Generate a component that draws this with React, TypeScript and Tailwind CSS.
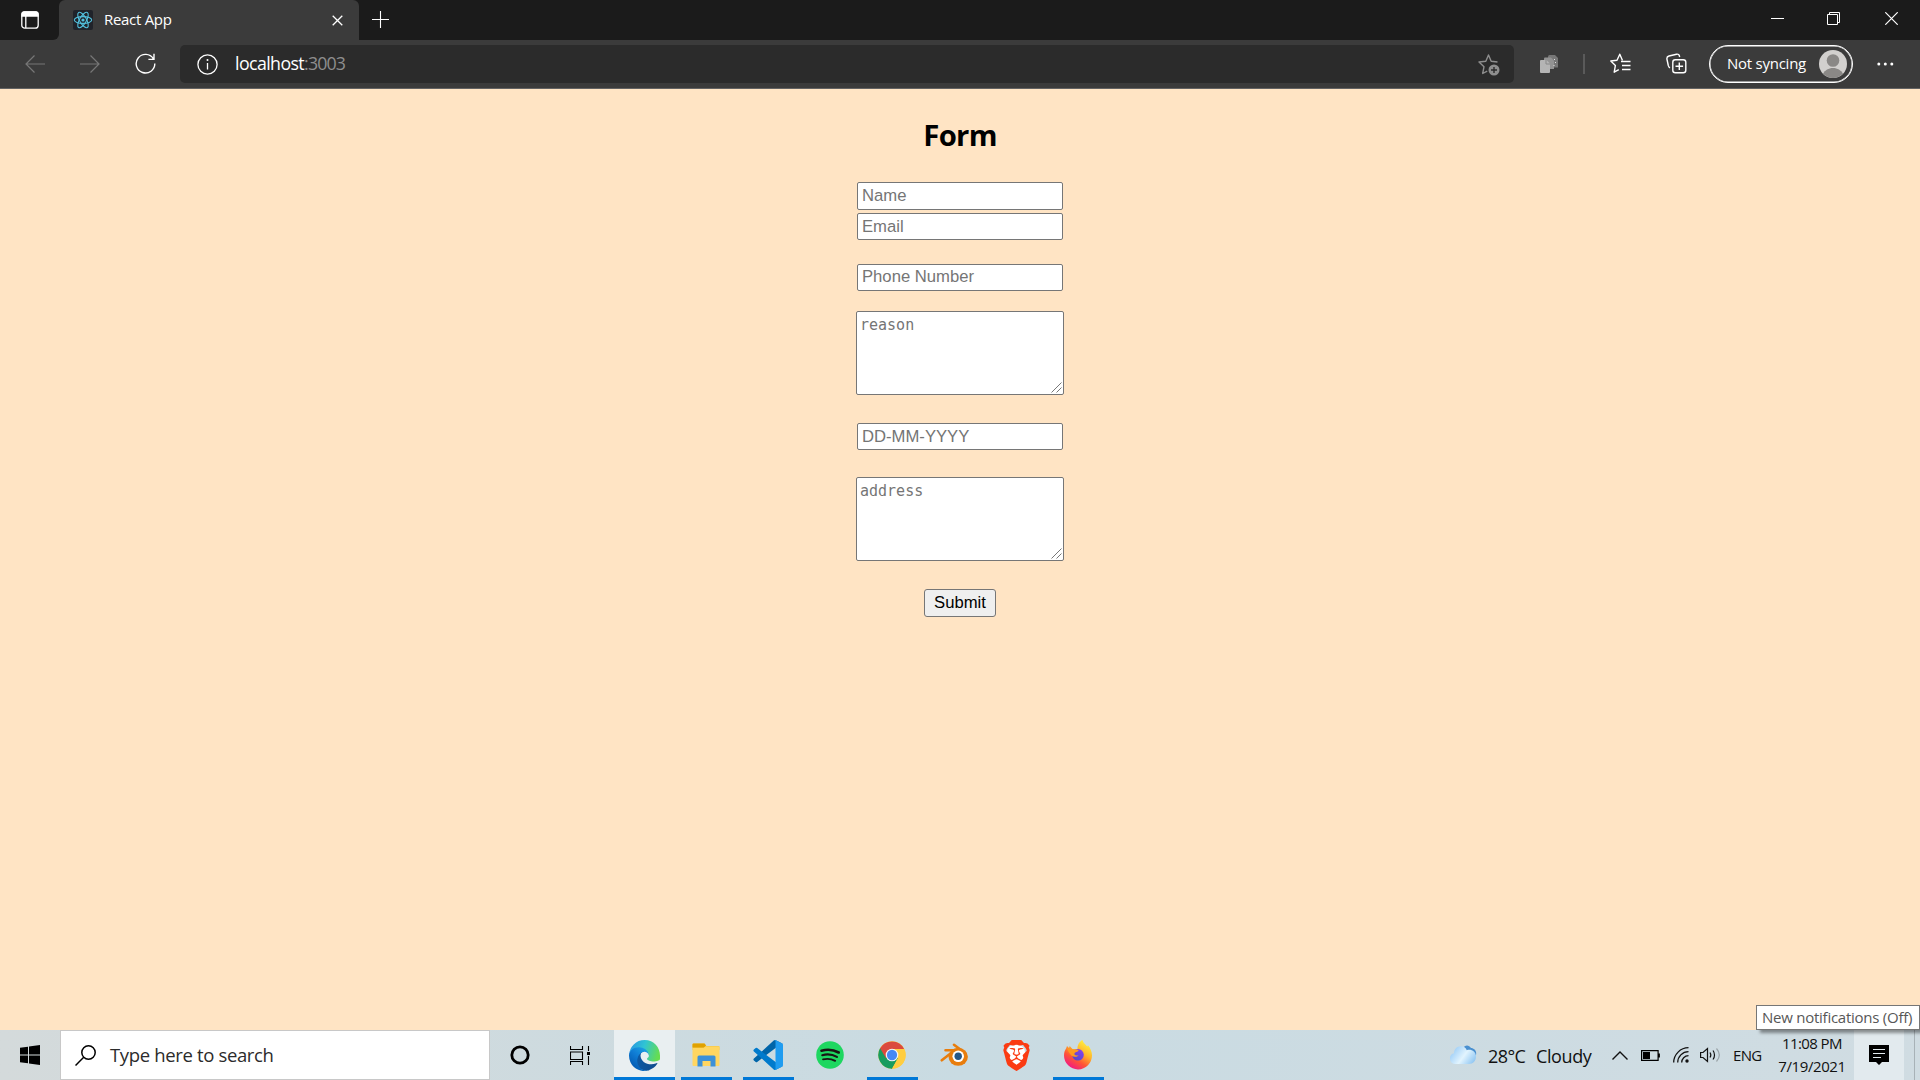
import type { ReactNode } from "react";
import { SiBrave } from "react-icons/si";

type IconProps = { w: number; h: number; className?: string; children: ReactNode; sw?: number };

function Icon({ w, h, className = "", children, sw = 1.4 }: IconProps) {
  return (
    <svg
      width={w}
      height={h}
      viewBox={`0 0 ${w} ${h}`}
      fill="none"
      stroke="currentColor"
      strokeWidth={sw}
      className={`block shrink-0 ${className}`}
    >
      {children}
    </svg>
  );
}

function TitleBar() {
  return (
    <div className="flex h-10 bg-[#1b1b1b] text-white">
      <div className="flex w-[59px] shrink-0 items-center bg-[#3b3b3b]">
        <div className="flex h-10 w-full items-center rounded-br-[6px] bg-[#1b1b1b] pl-[21px]">
          <Icon w={18} h={18} sw={1.3}>
            <rect x="0.8" y="0.8" width="16.4" height="16.4" rx="3" />
            <path d="M1 5V3a2 2 0 0 1 2-2h12a2 2 0 0 1 2 2v2z" fill="currentColor" />
            <path d="M4.8 5v12" />
          </Icon>
        </div>
      </div>
      <div className="flex w-[300px] shrink-0 items-center rounded-t-[6px] bg-[#3b3b3b] pl-[14px]">
        <Icon w={20} h={20} className="text-[#53c1de]" sw={1.1}>
          <rect width="20" height="20" rx="2" fill="#20232a" stroke="none" />
          <ellipse cx="10" cy="10" rx="8.7" ry="3.4" />
          <ellipse cx="10" cy="10" rx="8.7" ry="3.4" transform="rotate(60 10 10)" />
          <ellipse cx="10" cy="10" rx="8.7" ry="3.4" transform="rotate(120 10 10)" />
          <circle cx="10" cy="10" r="1.6" fill="currentColor" stroke="none" />
        </Icon>
        <span className="ml-[11px] w-[228px] pb-[2px] text-[15px] leading-5 tracking-[-0.3px] whitespace-nowrap">React App</span>
        <Icon w={11} h={11} className="mt-px" sw={1.3}>
          <path d="M0.7 0.7l9.6 9.6M10.3 0.7L0.7 10.3" />
        </Icon>
      </div>
      <div className="flex flex-1 items-center pl-[13px]">
        <Icon w={17} h={17} className="mb-px" sw={1.1}>
          <path d="M8.5 0v17M0 8.5h17" />
        </Icon>
        <div className="ml-auto flex items-center pr-[22px] pb-[3px]">
          <Icon w={13} h={13} sw={1}>
            <path d="M0 6.5h13" />
          </Icon>
          <Icon w={13} h={13} className="ml-[43px]" sw={1}>
            <path d="M0.5 2.5h10v10h-10zM2.5 2.5v-2h10v10h-2" />
          </Icon>
          <Icon w={13} h={13} className="ml-[45px]" sw={1.2}>
            <path d="M0.3 0.3l12.4 12.4M12.7 0.3L0.3 12.7" />
          </Icon>
        </div>
      </div>
    </div>
  );
}

function Toolbar() {
  return (
    <div className="flex h-[49px] items-center border-b border-[#636363] bg-[#3b3b3b] text-white">
      <Icon w={21} h={18} className="mb-px ml-[25px] text-[#777]" sw={1.2}>
        <path d="M20 9H1M9.5 0.5L1 9l8.5 8.5" />
      </Icon>
      <Icon w={21} h={18} className="mb-px ml-[34px] text-[#777]" sw={1.2}>
        <path d="M0 9h19M10.5 0.5L19 9l-8.5 8.5" />
      </Icon>
      <Icon w={21} h={21} className="mb-px ml-[34px]" sw={1.4}>
        <path d="M18.4 5.8A9.3 9.3 0 1 0 19.8 10.5M19 0.8v5.6h-5.6" />
      </Icon>
      <div className="ml-[24px] flex h-[38px] w-[1334px] items-center rounded-[5px] bg-[#2b2b2b] pl-[17px] pr-[14px]">
        <Icon w={21} h={21} sw={1.3}>
          <circle cx="10.5" cy="10.5" r="9.6" />
          <path d="M10.5 9v6.5" />
          <circle cx="10.5" cy="6" r="1" fill="currentColor" stroke="none" />
        </Icon>
        <span className="ml-[17px] pb-[2px] text-[17.8px] leading-6 tracking-[-0.6px] whitespace-nowrap">
          localhost<span className="tracking-[-0.85px] text-[#8e8e8e]">:3003</span>
        </span>
        <Icon w={22} h={22} className="ml-auto mt-px text-[#8e8e8e]" sw={1.4}>
          <path d="M19.5 8l-6.3-.8L10.5 1 7.8 7.2 1 8l5 4.7L4.7 19.5l4.5-2.3" strokeLinejoin="round" />
          <circle cx="16" cy="16" r="5.5" fill="currentColor" stroke="none" />
          <path d="M16 13v6M13 16h6" stroke="#2b2b2b" />
        </Icon>
      </div>
      <Icon w={19} h={18} className="ml-[26px]" sw={0}>
        <path d="M8 1.5a1.5 1.5 0 0 1 1.5-1.5H15l3 3v9.5h-10z" fill="#777" />
        <path d="M4 3.5a1 1 0 0 1 1-1h6l3 3v8.5H4z" fill="#939393" />
        <path d="M0 6a1 1 0 0 1 1-1h5.5l3.5 3.5V17a1 1 0 0 1-1 1H1a1 1 0 0 1-1-1z" fill="#b4b4b4" />
        <path d="M6 5v4h4" stroke="#888" strokeWidth="1" />
        <path d="M14.5 4v1M15.5 7v1M14 10v1" stroke="#ddd" strokeWidth="1" />
      </Icon>
      <div className="ml-[24px] h-5 w-[2px] bg-[#5a5a5a]" />
      <Icon w={21} h={21} className="mb-px ml-[25px]" sw={1.4}>
        <path d="M12.5 7.5L9.8 1.2 7 7.2l-6.2.8 4.6 4.4-1.2 6.8 4.6-2.5" strokeLinejoin="round" />
        <path d="M11 8.500h9.500M12 12.500h8.500M12 16.500h8.500" />
      </Icon>
      <Icon w={21} h={21} className="mb-px ml-[35px]" sw={1.4}>
        <rect x="6.8" y="6.8" width="13" height="13" rx="2.5" />
        <path d="M13.3 9.5v7.6M9.5 13.3h7.6" />
        <path d="M4 14.8C2.8 14.3 2.6 13.5 2.3 12.5L1 6.5C.6 4.6 1.3 3.4 3 3L10.5 1.2c1.7-.4 2.7.5 3.2 2.8" />
      </Icon>
      <div className="mb-px ml-[22px] flex h-[38px] w-[144px] items-center rounded-full border border-white pl-[17px] shadow-[inset_0_0_0_0.5px_white]">
        <span className="w-[92px] pb-px text-[15px] leading-5 tracking-[-0.25px] whitespace-nowrap">Not syncing</span>
        <Icon w={28} h={28} sw={0}>
          <circle cx="14" cy="14" r="14" fill="#d2d0ce" />
          <circle cx="14" cy="10.5" r="6.3" fill="#8a8886" />
          <path d="M4 23.8c2-3.6 5.5-5.8 10-5.8s8 2.2 10 5.8A14 14 0 0 1 4 23.8z" fill="#8a8886" />
        </Icon>
      </div>
      <Icon w={17} h={4} className="ml-[24px]" sw={0}>
        <circle cx="1.8" cy="2" r="1.5" fill="currentColor" />
        <circle cx="8.3" cy="2" r="1.5" fill="currentColor" />
        <circle cx="14.8" cy="2" r="1.5" fill="currentColor" />
      </Icon>
    </div>
  );
}

function Field({ label, className = "h-[27px]" }: { label: string; className?: string }) {
  return (
    <input
      placeholder={label}
      className={`block w-[206px] rounded-[2px] border border-[#767676] bg-white px-[4px] font-['Liberation_Sans',Arial,sans-serif] text-[16.67px] leading-5 outline-none placeholder:text-[#757575] ${className}`}
    />
  );
}

function Area({ label, className = "" }: { label: string; className?: string }) {
  return (
    <div className={`relative h-[84px] w-[208px] ${className}`}>
      <textarea
        placeholder={label}
        className="block h-full w-full resize-none rounded-[2px] border border-[#767676] bg-white px-[3px] py-[4px] font-['DejaVu_Sans_Mono',monospace] text-[15px] leading-[19px] outline-none placeholder:text-[#757575]"
      />
      <Icon w={11} h={11} className="absolute right-[2px] bottom-[2px] text-[#555]" sw={0.8}>
        <path d="M0.5 10.5l10-10M5.5 10.5l5-5" />
      </Icon>
    </div>
  );
}

function Page() {
  return (
    <main className="flex flex-1 flex-col items-center bg-[#ffe4c4]">
      <h1 className="mt-[26px] text-[29.3px] leading-[40px] font-bold tracking-[-0.7px] text-black">Form</h1>
      <Field label="Name" className="mt-[27px] h-[28px]" />
      <Field label="Email" className="mt-[3px] h-[27px] pt-px" />
      <Field label="Phone Number" className="mt-[24px] h-[27px] pb-[2px]" />
      <Area label="reason" className="mt-[20px]" />
      <Field label="DD-MM-YYYY" className="mt-[28px] h-[27px]" />
      <Area label="address" className="mt-[27px]" />
      <button className="mt-[28px] h-[28px] w-[72px] rounded-[3px] border border-[#767676] bg-[#efefef] font-['Liberation_Sans',Arial,sans-serif] text-[16.67px] leading-5 text-black">
        Submit
      </button>
    </main>
  );
}

function EdgeIcon() {
  return (
    <svg width="31" height="31" viewBox="0 0 256 256">
      <defs>
        <linearGradient id="edgeA" x1="60" y1="180" x2="240" y2="180" gradientUnits="userSpaceOnUse">
          <stop offset="0" stopColor="#0c59a4" />
          <stop offset="1" stopColor="#114a8b" />
        </linearGradient>
        <linearGradient id="edgeB" x1="150" y1="90" x2="45" y2="215" gradientUnits="userSpaceOnUse">
          <stop offset="0" stopColor="#1b9de2" />
          <stop offset=".5" stopColor="#0f7cd4" />
          <stop offset="1" stopColor="#0560b8" />
        </linearGradient>
        <linearGradient id="edgeC" x1="10" y1="50" x2="240" y2="130" gradientUnits="userSpaceOnUse">
          <stop offset="0" stopColor="#2899e0" />
          <stop offset=".45" stopColor="#30c4d4" />
          <stop offset="1" stopColor="#66dd50" />
        </linearGradient>
      </defs>
      <path d="M231 190a94 94 0 0 1-11 5 102 102 0 0 1-36 6c-47 0-89-32-89-74a31 31 0 0 1 17-27c-43 2-54 46-54 72 0 74 68 81 82 81 8 0 20-2 27-4l1-1a128 128 0 0 0 67-53 4 4 0 0 0-4-5z" fill="url(#edgeA)" />
      <path d="M106 241a79 79 0 0 1-23-21 81 81 0 0 1 30-120c3-1 8-4 16-4a33 33 0 0 1 26 13 33 33 0 0 1 6 19c0 0 25-80-80-80-44 0-81 42-81 79a130 130 0 0 0 12 56 128 128 0 0 0 156 67 75 75 0 0 1-62-9z" fill="url(#edgeB)" />
      <path d="M152 149c-1 1-3 3-3 7 0 3 2 7 6 9 20 14 56 12 57 12a81 81 0 0 0 41-11 84 84 0 0 0 3-37C256 60 207 0 129 0A128 128 0 0 0 1 126c0-37 37-66 81-66 3 0 23 0 42 10 17 9 26 19 32 30 6 11 8 25 8 31 0 6-3 13-12 18z" fill="url(#edgeC)" />
    </svg>
  );
}

function FolderIcon() {
  return (
    <svg width="28" height="24" viewBox="0 0 28 24">
      <path d="M.5 4V1.5A1 1 0 0 1 1.5.5h11l2 2.5h12a1 1 0 0 1 1 1v3H.5z" fill="#f5c43f" />
      <path d="M.5 4V1.5a1 1 0 0 1 1-1h11l1.5 2-2 2H.5z" fill="#e0a100" />
      <path d="M.5 5h11l2-1.5h14V22a1 1 0 0 1-1 1h-25a1 1 0 0 1-1-1z" fill="#ffd661" />
      <path d="M5.5 23.5V14a1.5 1.5 0 0 1 1.5-1.5h15a1.5 1.5 0 0 1 1.5 1.5v9.500h-5V18h-8v5.500z" fill="#3c91d8" />
    </svg>
  );
}

function CodeIcon() {
  return (
    <svg width="30" height="30" viewBox="0 0 100 100">
      <path d="M96 11L76 1a6 6 0 0 0-7 1L3 62a4 4 0 0 0 0 6l6 5a4 4 0 0 0 5 0L93 13c3-2 7 0 7 3.3V16a6 6 0 0 0-4-5z" fill="#0065a9" />
      <path d="M96 89L76 99a6 6 0 0 1-7-1L3 38a4 4 0 0 1 0-6l6-5a4 4 0 0 1 5 0l79 60c3 2 7 0 7-3.300V84a6 6 0 0 1-4 5z" fill="#007acc" />
      <path d="M76 99a6 6 0 0 1-7-1c2.3 2.3 6 .6 6-2.500V4.500C75 1.400 71.300-.2 69 2a6 6 0 0 1 7-1l20 9.500A6 6 0 0 1 100 16v68a6 6 0 0 1-4 5.500z" fill="#1f9cf0" />
    </svg>
  );
}

function SpotifyIcon() {
  return (
    <svg width="28" height="28" viewBox="0 0 28 28" fill="none" stroke="#191414" strokeLinecap="round">
      <circle cx="14" cy="14" r="13.8" fill="#1ed760" stroke="none" />
      <path d="M5.5 9.700c6-1.700 12.200-1 17.200 1.800" strokeWidth="2.6" />
      <path d="M6.3 14.200c5-1.400 10.200-.8 14.600 1.700" strokeWidth="2.2" />
      <path d="M7 18.400c4.300-1.100 8.500-.6 12.200 1.500" strokeWidth="1.8" />
    </svg>
  );
}

function ChromeIcon() {
  return (
    <svg width="28" height="28" viewBox="0 0 48 48">
      <circle cx="24" cy="24" r="23.5" fill="#ffcd40" />
      <path d="M24 24L3.7 12.2A23.5 23.5 0 0 0 24 47.5l10.400-18z" fill="#179c5e" />
      <path d="M24 13.5h20.8A23.5 23.5 0 0 0 3.6 12.300L14 30z" fill="#db4a3e" />
      <path d="M14.8 29.200L24 24l9.200 5.200L23.600 47.500z" fill="#179c5e" />
      <path d="M24 47.500L34 29.500V13.500h10.900A23.500 23.500 0 0 1 24 47.500z" fill="#ffcd40" />
      <circle cx="24" cy="24" r="10.8" fill="#f5f5f5" />
      <circle cx="24" cy="24" r="8.8" fill="#4688f4" />
    </svg>
  );
}

function BlenderIcon() {
  return (
    <svg width="28" height="24" viewBox="0 0 28 24">
      <path d="M14 1.8L25 10M5.5 7.3h13M1.8 17.3L14 7.8" stroke="#e87d0d" strokeWidth="2.6" strokeLinecap="round" fill="none" />
      <ellipse cx="18.2" cy="13.8" rx="9.7" ry="9" fill="#e87d0d" />
      <circle cx="18.2" cy="13.3" r="5.8" fill="#fff" />
      <circle cx="18.2" cy="13.3" r="3.7" fill="#265787" />
    </svg>
  );
}

function BraveIcon() {
  return (
    <div className="relative flex size-[31px] items-center justify-center">
      <div className="h-[21px] w-[18px] rounded-[7px] bg-white" />
      <SiBrave className="absolute inset-0 size-[31px] text-[#fb3b12]" />
    </div>
  );
}

function FirefoxIcon() {
  return (
    <svg width="28" height="30" viewBox="0 0 28 30">
      <defs>
        <linearGradient id="fxA" x1="22" y1="2" x2="5" y2="28" gradientUnits="userSpaceOnUse">
          <stop offset="0" stopColor="#fff03f" />
          <stop offset=".35" stopColor="#ffb52b" />
          <stop offset=".65" stopColor="#ff5634" />
          <stop offset="1" stopColor="#f0128c" />
        </linearGradient>
        <linearGradient id="fxB" x1="18" y1="9" x2="10" y2="21" gradientUnits="userSpaceOnUse">
          <stop offset="0" stopColor="#8a3ff0" />
          <stop offset="1" stopColor="#4c4bc8" />
        </linearGradient>
      </defs>
      <path d="M18.5 0c.5 3 3 4.2 4.8 6.5L24 5.3c2.5 3 4 6.7 4 10A14 14 0 0 1 0 15.5C0 12.5 1 10 2.200 8.300L3 6l2 2 .7-2 3 3.300 4.800-.3C13.300 5 15.500 1.500 18.500 0z" fill="url(#fxA)" />
      <circle cx="14" cy="14.8" r="5.8" fill="url(#fxB)" />
      <path d="M3 8l5.7 1.300 3 .2c1.300 0 2.800.5 3 1.200-1 1.500-3.700 1-4.300 2.700-.3 1.600 2 2.700 4.200 1.500-1 2.300-4.600 2.600-7 .8C5.500 13.800 4 11 3 8z" fill="#ff9a1f" />
    </svg>
  );
}

function AppButton({ children, active = false, running = false }: { children: ReactNode; active?: boolean; running?: boolean }) {
  return (
    <div className={`flex h-[50px] shrink-0 flex-col items-center ${active ? "w-[61px] bg-[#e9eff1]" : "w-[62px]"}`}>
      <div className="flex h-[47px] items-center pt-[3px]">{children}</div>
      {active && <div className="h-[3px] w-full bg-[#0078d7]" />}
      {running && <div className="h-[3px] w-[51px] bg-[#0078d7]" />}
    </div>
  );
}

function Taskbar() {
  return (
    <footer className="flex h-[50px] shrink-0 items-center bg-linear-to-r from-[#d4dadb] via-[#c9dbe2] to-[#d0dce2] text-[#111]">
      <Icon w={20} h={20} className="ml-5 text-black" sw={0}>
        <path d="M0 2.8l8-1.100v7.800H0zM9 1.500L20 0v9.500H9zM0 10.500h8v7.800l-8-1.100zM9 10.500h11V20L9 18.500z" fill="currentColor" />
      </Icon>
      <div className="ml-5 flex h-[50px] w-[430px] items-center border border-[#c8c8c8] bg-white pl-[14px]">
        <Icon w={21} h={21} sw={1.5} className="text-black">
          <circle cx="13.5" cy="7.5" r="6.7" />
          <path d="M8.7 12.3L0.5 20.5" />
        </Icon>
        <span className="ml-[14px] text-[18.5px] leading-6 tracking-[-0.35px] whitespace-nowrap text-[#2b2b2b]">Type here to search</span>
      </div>
      <Icon w={20} h={20} className="ml-5 text-black" sw={2.8}>
        <circle cx="10" cy="10" r="8.2" />
      </Icon>
      <Icon w={21} h={19} className="ml-[40px] text-black" sw={1.1}>
        <path d="M.5 0v3.500h12V0M.5 19v-3.500h12V19M.5 6h12v7.500H.5zM18.500 0v5M18.500 10v9" />
        <rect x="17" y="6" width="3" height="3" fill="currentColor" stroke="none" />
      </Icon>
      <div className="ml-[23px] flex">
        <AppButton active><EdgeIcon /></AppButton>
        <AppButton running><FolderIcon /></AppButton>
        <AppButton running><CodeIcon /></AppButton>
        <AppButton><SpotifyIcon /></AppButton>
        <AppButton running><ChromeIcon /></AppButton>
        <AppButton><BlenderIcon /></AppButton>
        <AppButton><BraveIcon /></AppButton>
        <AppButton running><FirefoxIcon /></AppButton>
      </div>
      <div className="ml-auto flex h-[50px] w-[470px] shrink-0 items-center">
        <svg width="27" height="20" viewBox="0 0 27 20" className="block shrink-0">
          <defs>
            <linearGradient id="cloud" x1="2" y1="3" x2="25" y2="20" gradientUnits="userSpaceOnUse">
              <stop offset="0" stopColor="#94c9f6" />
              <stop offset=".5" stopColor="#e2f4fe" />
              <stop offset="1" stopColor="#7fbdf0" />
            </linearGradient>
          </defs>
          <path d="M13 3c2-3.500 6-3.500 8 0 3 0 6 3 5 7L18 14z" fill="#4a90d0" />
          <path d="M5.500 19A5.500 5.500 0 0 1 4 8.200C4 4 7 1.200 10.800 1.200c3 0 5 1.500 6 4 4-1.500 9.200 1 9.200 6.300 0 4.500-3 7.500-7 7.500z" fill="url(#cloud)" />
        </svg>
        <span className="ml-[11px] w-[49px] pt-px text-[18px] leading-6 tracking-[-0.6px] whitespace-nowrap">28°C</span>
        <span className="-ml-px w-[76px] pt-px text-[18px] leading-6 tracking-[-0.4px] whitespace-nowrap">Cloudy</span>
        <Icon w={16} h={9} sw={1.4}>
          <path d="M0.5 8.500L8 1l7.500 7.500" />
        </Icon>
        <Icon w={19} h={11} className="ml-[13px] mt-px text-black" sw={1.2}>
          <path d="M.6.6h16.500v9.800H.6zM18.300 3.500v4" />
          <rect x="2" y="2" width="7" height="7" fill="currentColor" stroke="none" />
        </Icon>
        <Icon w={16} h={16} className="ml-[13px]" sw={1.3}>
          <path d="M.7 15.500C.7 7.500 7.500.7 15.500.7M4.700 15.500C4.700 9.500 9.500 4.700 15.500 4.700M8.700 15.500c0-3.800 3-6.800 6.800-6.800" />
          <circle cx="14" cy="14" r="1.7" fill="currentColor" stroke="none" />
        </Icon>
        <Icon w={21} h={16} className="ml-[11px]" sw={1.2}>
          <path d="M.6 5.500H3L7.500 1.500v13L3 10.500H.6zM10 5.500c1 1.500 1 3.500 0 5M13 3.500c2 2.500 2 6.500 0 9" />
          <path d="M16.500 1.500c3.500 4 3.500 9 0 13" stroke="#9aa4a8" />
        </Icon>
        <span className="ml-[12px] w-[40px] text-[15px] leading-5 tracking-[-0.7px] whitespace-nowrap">ENG</span>
        <div className="flex h-[50px] w-[78px] flex-col items-center pt-[2px] text-[15px] leading-[23px] whitespace-nowrap">
          <span className="tracking-[-0.6px]">11:08 PM</span>
          <span className="tracking-[-0.4px]">7/19/2021</span>
        </div>
        <div className="ml-[3px] flex h-[50px] w-[50px] items-center justify-center bg-[#e2eaee]">
          <Icon w={20} h={20} className="text-black" sw={0}>
            <path d="M0 0h20v17h-7l-3 3-3-3H0z" fill="currentColor" />
            <path d="M4 4.500h12M4 8.500h12M4 12.500h8" stroke="#e2eaee" strokeWidth="1.2" />
          </Icon>
        </div>
        <div className="ml-[10px] h-[50px] w-px bg-[#a8b2b7]" />
      </div>
    </footer>
  );
}

export default function App() {
  return (
    <div className="relative flex h-[1080px] w-[1920px] flex-col overflow-hidden font-['Open_Sans','Noto_Sans',sans-serif]">
      <TitleBar />
      <Toolbar />
      <Page />
      <Taskbar />
      <div className="absolute right-0 bottom-[50px] flex h-[25px] w-[164px] items-center border border-[#767676] bg-white pl-[5px] text-[15px] tracking-[-0.25px] whitespace-nowrap text-[#575757] shadow-[4px_3px_3px_rgba(0,0,0,0.4)]">
        New notifications (Off)
      </div>
    </div>
  );
}
